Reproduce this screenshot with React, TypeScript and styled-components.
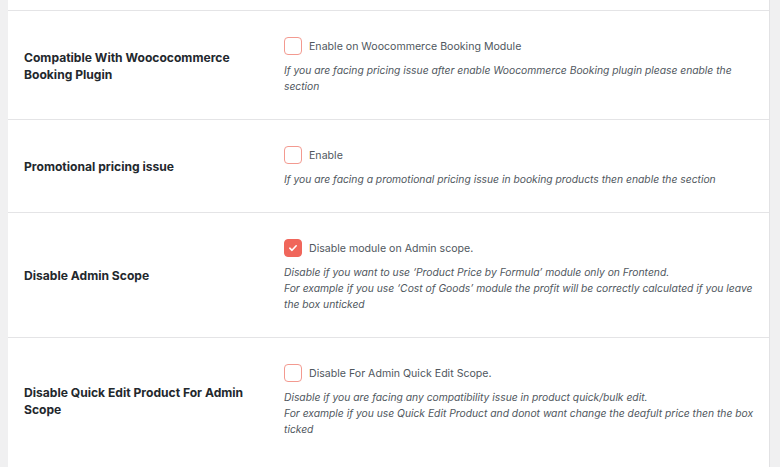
import React from 'react'
import styled, { createGlobalStyle } from 'styled-components'

const GlobalStyle = createGlobalStyle`
  html, body {
    margin: 0;
    padding: 0;
    background: #f0f0f1;
    font-family: Inter, "Noto Sans", sans-serif;
  }
`

const Page = styled.main`
  display: flex;
  padding: 0 10px 0 8px;
  min-height: 467px;
  overflow: hidden;
`

const Panel = styled.section`
  flex: 1;
  background: #fff;
  border-right: 1px solid #e2e2e4;
`

const Tail = styled.div`
  height: 10px;
`

const Row = styled.div`
  display: grid;
  grid-template-columns: 260px 1fr;
  align-items: center;
  padding: 26px 4px 25px 16px;
  border-top: 1px solid #e4e4e6;
`

const Label = styled.h3`
  margin: 0;
  font-size: 12.1px;
  line-height: 17px;
  font-weight: 700;
  color: #23282d;
  max-width: 225px;
`

const Control = styled.div`
  display: flex;
  flex-direction: column;
  gap: 7px;
`

const Option = styled.label`
  display: flex;
  align-items: center;
  gap: 7px;
  height: 18px;
  font-size: 10.6px;
  color: #50575e;
`

const Box = styled.span<{ $checked?: boolean }>`
  box-sizing: border-box;
  width: 18px;
  height: 18px;
  border-radius: 4px;
  border: 1.5px solid ${p => (p.$checked ? '#f0665b' : '#f39a90')};
  background: ${p => (p.$checked ? '#f0665b' : '#fff')};
  display: flex;
  align-items: center;
  justify-content: center;
`

const Desc = styled.p`
  margin: 0;
  font-size: 10.3px;
  line-height: 16px;
  font-style: italic;
  color: #50575e;
  max-width: 481px;
`

type Setting = {
  title: string
  option: string
  checked?: boolean
  desc: string[]
}

const settings: Setting[] = [
  {
    title: 'Compatible With Woococommerce Booking Plugin',
    option: 'Enable on Woocommerce Booking Module',
    desc: [
      'If you are facing pricing issue after enable Woocommerce Booking plugin please enable the section',
    ],
  },
  {
    title: 'Promotional pricing issue',
    option: 'Enable',
    desc: ['If you are facing a promotional pricing issue in booking products then enable the section'],
  },
  {
    title: 'Disable Admin Scope',
    option: 'Disable module on Admin scope.',
    checked: true,
    desc: [
      'Disable if you want to use \u2018Product Price by Formula\u2019 module only on Frontend.',
      'For example if you use \u2018Cost of Goods\u2019 module the profit will be correctly calculated if you leave the box unticked',
    ],
  },
  {
    title: 'Disable Quick Edit Product For Admin Scope',
    option: 'Disable For Admin Quick Edit Scope.',
    desc: [
      'Disable if you are facing any compatibility issue in product quick/bulk edit.',
      'For example if you use Quick Edit Product and donot want change the deafult price then the box ticked',
    ],
  },
]

const Check = () => (
  <svg width="10" height="10" viewBox="0 0 10 10">
    <path d="M1.8 5.2 L4 7.3 L8.2 2.8" fill="none" stroke="#fff" strokeWidth="1.6" strokeLinecap="round" strokeLinejoin="round" />
  </svg>
)

const App = () => (
  <>
    <GlobalStyle />
    <Page>
      <Panel>
        <Tail />
        {settings.map(s => (
          <Row key={s.title}>
            <Label>{s.title}</Label>
            <Control>
              <Option>
                <Box $checked={s.checked}>{s.checked && <Check />}</Box>
                {s.option}
              </Option>
              <Desc>
                {s.desc.map((line, i) => (
                  <React.Fragment key={i}>
                    {i > 0 && <br />}
                    {line}
                  </React.Fragment>
                ))}
              </Desc>
            </Control>
          </Row>
        ))}
      </Panel>
    </Page>
  </>
)

export default App
